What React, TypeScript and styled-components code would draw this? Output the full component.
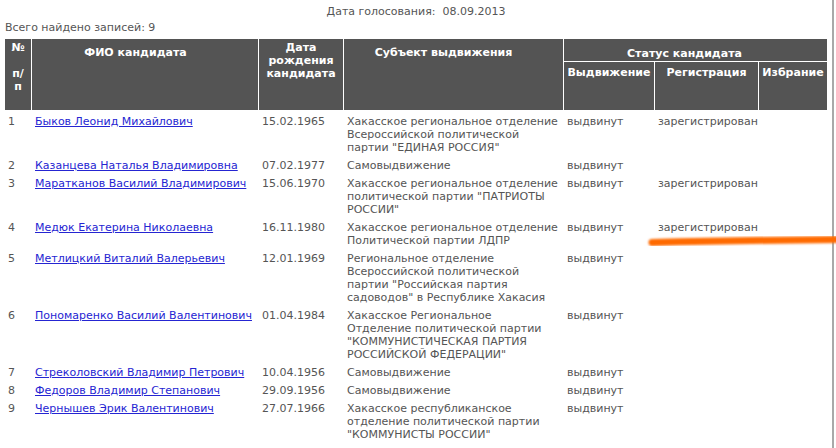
import React from "react";
import styled, { createGlobalStyle } from "styled-components";

const Global = createGlobalStyle`
  html, body { margin: 0; padding: 0; background: #fff; overflow: hidden; }
  body { font-family: "DejaVu Sans", Verdana, sans-serif; font-size: 11px; color: #555; }
`;

const Page = styled.div`
  position: relative;
  width: 832px;
  min-height: 448px;
  border-right: 2px solid #a9a9a9;
  box-sizing: content-box;
  padding: 5px 0 0 0;
`;

const VoteDate = styled.div`
  text-align: center;
  line-height: 13px;
  white-space: pre;
  color: #555;
`;

const Found = styled.div`
  margin: 3px 0 0 5px;
  line-height: 13px;
  color: #555;
`;

const Table = styled.table`
  margin: 4px 0 0 4px;
  border-collapse: separate;
  border-spacing: 1px;
  table-layout: fixed;
  width: 824px;
`;

const Col = styled.col<{ $w: number }>`
  width: ${(p) => p.$w}px;
`;

const Th = styled.th<{ $pt?: number; $pr?: number; $h?: number }>`
  background: #545454;
  color: #fff;
  font-weight: bold;
  line-height: 13px;
  text-align: center;
  vertical-align: top;
  padding: ${(p) => p.$pt ?? 2}px ${(p) => p.$pr ?? 0}px 0 0;
  height: ${(p) => (p.$h ? `${p.$h}px` : "auto")};
  box-sizing: border-box;
  white-space: nowrap;
`;

const Td = styled.td`
  vertical-align: top;
  line-height: 13px;
  padding: 4px 0 0 3px;
  color: #555;
  white-space: nowrap;
`;

const NameLink = styled.a`
  color: #2525d2;
  text-decoration: underline;
`;

const Stroke = styled.svg`
  position: absolute;
  left: 636px;
  top: 228px;
  width: 200px;
  height: 24px;
  pointer-events: none;
`;

type Row = {
  n: number;
  name: string;
  date: string;
  subject: string[];
  nom: string;
  reg: string;
};

const rows: Row[] = [
  { n: 1, name: "Быков Леонид Михайлович", date: "15.02.1965", subject: ["Хакасское региональное отделение", "Всероссийской политической", "партии \"ЕДИНАЯ РОССИЯ\""], nom: "выдвинут", reg: "зарегистрирован" },
  { n: 2, name: "Казанцева Наталья Владимировна", date: "07.02.1977", subject: ["Самовыдвижение"], nom: "выдвинут", reg: "" },
  { n: 3, name: "Маратканов Василий Владимирович", date: "15.06.1970", subject: ["Хакасское региональное отделение", "политической партии \"ПАТРИОТЫ", "РОССИИ\""], nom: "выдвинут", reg: "зарегистрирован" },
  { n: 4, name: "Медюк Екатерина Николаевна", date: "16.11.1980", subject: ["Хакасское региональное отделение", "Политической партии ЛДПР"], nom: "выдвинут", reg: "зарегистрирован" },
  { n: 5, name: "Метлицкий Виталий Валерьевич", date: "12.01.1969", subject: ["Региональное отделение", "Всероссийской политической", "партии \"Российская партия", "садоводов\" в Республике Хакасия"], nom: "выдвинут", reg: "" },
  { n: 6, name: "Пономаренко Василий Валентинович", date: "01.04.1984", subject: ["Хакасское Региональное", "Отделение политической партии", "\"КОММУНИСТИЧЕСКАЯ ПАРТИЯ", "РОССИЙСКОЙ ФЕДЕРАЦИИ\""], nom: "выдвинут", reg: "" },
  { n: 7, name: "Стреколовский Владимир Петрович", date: "10.04.1956", subject: ["Самовыдвижение"], nom: "выдвинут", reg: "" },
  { n: 8, name: "Федоров Владимир Степанович", date: "29.09.1956", subject: ["Самовыдвижение"], nom: "выдвинут", reg: "" },
  { n: 9, name: "Чернышев Эрик Валентинович", date: "27.07.1966", subject: ["Хакасское республиканское", "отделение политической партии", "\"КОММУНИСТЫ РОССИИ\""], nom: "выдвинут", reg: "" },
];

export default function App() {
  return (
    <>
      <Global />
      <Page>
        <VoteDate>{"Дата голосования:  08.09.2013"}</VoteDate>
        <Found>Всего найдено записей: 9</Found>
        <Table>
          <colgroup>
            <Col $w={26} />
            <Col $w={226} />
            <Col $w={84} />
            <Col $w={219} />
            <Col $w={90} />
            <Col $w={103} />
            <Col $w={68} />
          </colgroup>
          <thead>
            <tr>
              <Th rowSpan={2} $pt={2}>
                №<br />
                <br />
                п/
                <br />п
              </Th>
              <Th rowSpan={2} $pt={7} $pr={19}>ФИО кандидата</Th>
              <Th rowSpan={2} $pt={2}>
                Дата
                <br />
                рождения
                <br />
                кандидата
              </Th>
              <Th rowSpan={2} $pt={7} $pr={20}>Субъект выдвижения</Th>
              <Th colSpan={3} $pt={8} $pr={22} $h={22}>Статус кандидата</Th>
            </tr>
            <tr>
              <Th $pt={4} $h={48}>Выдвижение</Th>
              <Th $pt={4} $h={48}>Регистрация</Th>
              <Th $pt={4} $h={48}>Избрание</Th>
            </tr>
          </thead>
          <tbody>
            {rows.map((r) => (
              <tr key={r.n}>
                <Td>{r.n}</Td>
                <Td>
                  <NameLink href="#">{r.name}</NameLink>
                </Td>
                <Td>{r.date}</Td>
                <Td>
                  {r.subject.map((l, i) => (
                    <React.Fragment key={i}>
                      {i > 0 && <br />}
                      {l}
                    </React.Fragment>
                  ))}
                </Td>
                <Td>{r.nom}</Td>
                <Td>{r.reg}</Td>
                <Td></Td>
              </tr>
            ))}
          </tbody>
        </Table>
        <Stroke viewBox="0 0 200 24">
          <defs>
            <filter id="soft" x="-10%" y="-100%" width="120%" height="300%">
              <feGaussianBlur stdDeviation="0.9" />
            </filter>
          </defs>
          <path
            d="M 16 14.5 Q 100 12.5 206 11.5"
            stroke="#ff6a00"
            strokeWidth="7"
            strokeLinecap="round"
            fill="none"
            filter="url(#soft)"
          />
        </Stroke>
      </Page>
    </>
  );
}
